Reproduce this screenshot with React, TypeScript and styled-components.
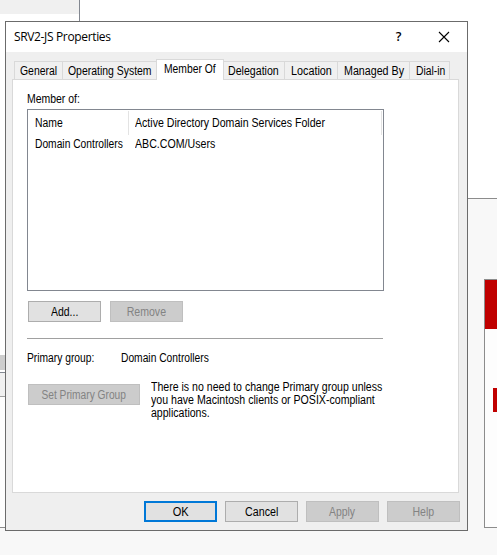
import React from 'react';
import styled, { createGlobalStyle, css } from 'styled-components';

const GlobalStyle = createGlobalStyle`
  *, *::before, *::after { box-sizing: border-box; }
  body { margin: 0; overflow: hidden; }
`;

const Desktop = styled.div`
  position: relative;
  display: grid;
  grid-template-columns: 80px 1fr;
  width: 497px;
  height: 555px;
  overflow: hidden;
  background: #f8f8f8;
  font: 12px/13px 'Liberation Sans', Arial, sans-serif;
  color: #000;
`;

const LeftPane = styled.div`
  display: flex;
  flex-direction: column;
  height: 528px;
  background: #fdfdfd;
  border-bottom: 1px solid #8c8c8c;
`;

const Strip = styled.div<{ $h: number; $bg: string; $edge?: string }>`
  flex: none;
  height: ${(p) => p.$h}px;
  background: ${(p) => p.$bg};
  ${(p) => p.$edge && css`border-bottom: 1px solid ${p.$edge};`}
`;

const TreeArea = styled.div`
  flex: none;
  height: 355px;
  border-right: 1px solid #828790;
  background: #fff;
`;

const RightPane = styled.div`
  display: flex;
  flex-direction: column;
`;

const BlankArea = styled.div`
  flex: none;
  height: 199px;
  border-bottom: 1px solid #8c8c8c;
  background: #fff;
`;

const Card = styled.div`
  display: flex;
  flex-direction: column;
  align-items: flex-end;
  height: 249px;
  margin: 80px 0 0 404px;
  border: solid #8c8c8c;
  border-width: 1px 0 1px 1px;
  background: #fdfdfd;
`;

const CardHeader = styled.div`
  align-self: stretch;
  height: 49px;
  background: #c00000;
`;

const CardMark = styled.div`
  width: 4px;
  height: 24px;
  margin-top: 59px;
  background: #c00000;
`;

const Dialog = styled.section`
  position: absolute;
  left: 5px;
  top: 21px;
  display: flex;
  flex-direction: column;
  width: 463px;
  height: 510px;
  border: 1px solid #6b6b6b;
  background: #efefef;
`;

const TitleBar = styled.header`
  display: flex;
  align-items: center;
  flex: none;
  height: 30px;
  padding: 0 17px 1px 8px;
  background: #fff;
`;

const Title = styled.h1`
  flex: 1;
  margin: 0;
  font: 400 12px/16px 'Open Sans', sans-serif;
  letter-spacing: -0.35px;
`;

const HelpGlyph = styled.span`
  width: 9px;
  margin-right: 35px;
  text-align: center;
  font: 600 12.5px/16px 'Open Sans', sans-serif;
`;

const CloseIcon = styled.svg`
  display: block;
  width: 12px;
  height: 12px;
`;

const TabBar = styled.nav`
  display: flex;
  align-items: flex-end;
  flex: none;
  height: 27px;
  padding-left: 8px;
`;

const Tab = styled.button<{ $w: number; $pad?: number; $active?: boolean; $first?: boolean }>`
  display: flex;
  align-items: flex-start;
  flex: none;
  width: ${(p) => p.$w}px;
  height: 18px;
  margin: 0;
  padding: 3px 0 0 ${(p) => p.$pad ?? 5}px;
  border: solid #d9d9d9;
  border-width: 1px 1px 0 ${(p) => (p.$first ? 1 : 0)}px;
  background: #f0f0f0;
  color: #000;
  font: inherit;
  ${(p) =>
    p.$active &&
    css`
      position: relative;
      height: 21px;
      margin: 0 0 -1px -1px;
      padding: 3px 0 0 7px;
      border-left-width: 1px;
      background: #fff;
    `}
`;

const Page = styled.main`
  flex: none;
  width: 447px;
  height: 414px;
  margin-left: 6px;
  padding: 13px 0 0 14px;
  border: 1px solid #d9d9d9;
  background: #fff;
`;

/* Condensed dialog lettering: $sx narrows the glyphs horizontally. */
const Text = styled.span<{ $sx: number; $center?: boolean }>`
  display: block;
  white-space: nowrap;
  transform: scaleX(${(p) => p.$sx});
  transform-origin: ${(p) => (p.$center ? 'center' : 'left')};
`;

const ListBox = styled.div`
  width: 357px;
  height: 182px;
  margin-top: 3px;
  padding-top: 1px;
  border: 1px solid #828790;
  background: #fff;
`;

const ListRow = styled.div<{ $header?: boolean }>`
  display: grid;
  grid-template-columns: 101px 253px;
  height: ${(p) => (p.$header ? 24 : 19)}px;
`;

const Cell = styled.div<{ $header?: boolean; $first?: boolean }>`
  display: flex;
  align-items: center;
  min-width: 0;
  padding-left: ${(p) => (p.$first ? 7 : 6)}px;
  border-right: 1px solid ${(p) => (p.$header ? '#e3e3e3' : 'transparent')};
`;

const Button = styled.button<{ $w?: number; $primary?: boolean }>`
  display: flex;
  align-items: center;
  justify-content: center;
  flex: none;
  width: ${(p) => p.$w ?? 73}px;
  height: 21px;
  padding: ${(p) => (p.$primary ? 1 : 2)}px 0 0;
  border: ${(p) => (p.$primary ? '2px solid #0078d7' : '1px solid #adadad')};
  border-radius: 0;
  background: #e1e1e1;
  color: #000;
  font: inherit;
  &:disabled {
    border-color: #bfbfbf;
    background: #cccccc;
    color: #838383;
  }
`;

const ListActions = styled.div`
  display: flex;
  gap: 9px;
  margin: 10px 0 0 1px;
`;

const Divider = styled.hr`
  width: 356px;
  height: 1px;
  margin: 16px 0 0;
  border: 0;
  background: #a0a0a0;
`;

const PrimaryGroup = styled.div`
  display: grid;
  grid-template-columns: 94px 1fr;
  justify-items: start;
  margin-top: 13px;
`;

const PrimaryAction = styled.div`
  display: flex;
  gap: 11px;
  margin: 19px 0 0 1px;
`;

const Note = styled.div`
  display: flex;
  flex-direction: column;
  align-items: flex-start;
  margin-top: -3px;
`;

const Footer = styled.footer`
  display: flex;
  justify-content: flex-end;
  gap: 8px;
  padding: 8px 7px 0 0;
`;

const tabs = [
  { label: 'General', w: 49, sx: 0.87, first: true },
  { label: 'Operating System', w: 94, sx: 0.87 },
  { label: 'Member Of', w: 68, sx: 0.86, active: true },
  { label: 'Delegation', w: 61, sx: 0.885, pad: 4 },
  { label: 'Location', w: 53, sx: 0.9, pad: 6 },
  { label: 'Managed By', w: 72, sx: 0.89, pad: 6 },
  { label: 'Dial-in', w: 40, sx: 0.86, pad: 6 },
];

export default function App() {
  return (
    <>
      <GlobalStyle />
      <Desktop>
        <LeftPane>
          <TreeArea>
            <Strip $h={14} $bg="#f0f0f0" />
          </TreeArea>
          <Strip $h={15} $bg="#cdcdcd" />
          <Strip $h={3} $bg="#fff" $edge="#828790" />
          <Strip $h={24} $bg="#f0f0f0" $edge="#a0a0a0" />
        </LeftPane>
        <RightPane>
          <BlankArea />
          <Card>
            <CardHeader />
            <CardMark />
          </Card>
        </RightPane>

        <Dialog>
          <TitleBar>
            <Title>SRV2-JS Properties</Title>
            <HelpGlyph>?</HelpGlyph>
            <CloseIcon viewBox="0 0 12 12" fill="none" stroke="#000" strokeWidth="1.1">
              <path d="M1 1 L11 11 M11 1 L1 11" />
            </CloseIcon>
          </TitleBar>
          <TabBar>
            {tabs.map((t) => (
              <Tab key={t.label} $w={t.w} $pad={t.pad} $active={t.active} $first={t.first}>
                <Text $sx={t.sx}>{t.label}</Text>
              </Tab>
            ))}
          </TabBar>
          <Page>
            <Text $sx={0.87}>Member of:</Text>
            <ListBox>
              <ListRow $header>
                <Cell $header $first><Text $sx={0.865}>Name</Text></Cell>
                <Cell $header><Text $sx={0.882}>Active Directory Domain Services Folder</Text></Cell>
              </ListRow>
              <ListRow>
                <Cell $first><Text $sx={0.855}>Domain Controllers</Text></Cell>
                <Cell><Text $sx={0.885}>ABC.COM/Users</Text></Cell>
              </ListRow>
            </ListBox>
            <ListActions>
              <Button><Text $center $sx={0.87}>Add...</Text></Button>
              <Button disabled><Text $center $sx={0.88}>Remove</Text></Button>
            </ListActions>
            <Divider />
            <PrimaryGroup>
              <Text $sx={0.855}>Primary group:</Text>
              <Text $sx={0.855}>Domain Controllers</Text>
            </PrimaryGroup>
            <PrimaryAction>
              <Button disabled $w={112}><Text $center $sx={0.85}>Set Primary Group</Text></Button>
              <Note>
                <Text $sx={0.88}>There is no need to change Primary group unless</Text>
                <Text $sx={0.883}>you have Macintosh clients or POSIX-compliant</Text>
                <Text $sx={0.88}>applications.</Text>
              </Note>
            </PrimaryAction>
          </Page>
          <Footer>
            <Button $primary><Text $center $sx={0.92}>OK</Text></Button>
            <Button><Text $center $sx={0.89}>Cancel</Text></Button>
            <Button disabled><Text $center $sx={0.87}>Apply</Text></Button>
            <Button disabled><Text $center $sx={0.88}>Help</Text></Button>
          </Footer>
        </Dialog>
      </Desktop>
    </>
  );
}
